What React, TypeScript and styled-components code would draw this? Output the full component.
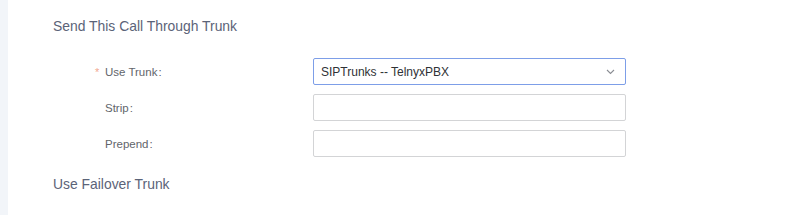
import styled, { createGlobalStyle } from "styled-components"

const GlobalStyle = createGlobalStyle`
  html, body {
    margin: 0;
    padding: 0;
    background: #ffffff;
    font-family: "Liberation Sans", Arial, sans-serif;
  }
`
const Page = styled.div`
  display: flex;
  width: 800px;
  height: 215px;
  overflow: hidden;
`
const Rail = styled.div`
  width: 8px;
  background-color: #f2f5f9;
  flex-shrink: 0;
`
const Main = styled.div`
  flex: 1;
  padding: 17px 0 0 45px;
`
const SectionTitle = styled.h3`
  margin: 0;
  font-size: 13.9px;
  font-weight: 400;
  line-height: 18px;
  color: #5b6378;
`
const Form = styled.div`
  display: flex;
  flex-direction: column;
  gap: 9px;
  margin: 23px 0 18px;
`
const Row = styled.div`
  display: flex;
  align-items: center;
`
const Label = styled.label`
  width: 218px;
  padding-left: 42px;
  font-size: 11.5px;
  color: #62656b;
  display: flex;
  align-items: center;
`
const Star = styled.span<{ $show?: boolean }>`
  width: 10px;
  color: #f2a98f;
  font-size: 11px;
  visibility: ${(p) => (p.$show ? "visible" : "hidden")};
`
const Colon = styled.span`
  margin-left: 1px;
`
const Field = styled.div<{ $focused?: boolean }>`
  box-sizing: border-box;
  width: 313px;
  height: 27px;
  border: 1px solid ${(p) => (p.$focused ? "#7d9ee8" : "#d3d4d6")};
  border-radius: 2px;
  display: flex;
  align-items: center;
  justify-content: space-between;
  padding: 0 10px 0 7px;
  font-size: 12px;
  color: #2f3236;
`
const Chevron = () => (
  <svg width="9" height="6" viewBox="0 0 9 6">
    <path d="M1 1l3.5 3.5L8 1" fill="none" stroke="#8a8d93" strokeWidth="1.1" />
  </svg>
)

type FormRowProps = {
  label: string
  required?: boolean
  value?: string
  select?: boolean
}

const FormRow = ({ label, required, value, select }: FormRowProps) => {
  return (
    <Row>
      <Label>
        <Star $show={required}>*</Star>
        {label}
        <Colon>:</Colon>
      </Label>
      <Field $focused={select}>
        <span>{value}</span>
        {select && <Chevron />}
      </Field>
    </Row>
  )
}

export default function App() {
  return (
    <Page>
      <GlobalStyle />
      <Rail />
      <Main>
        <SectionTitle>Send This Call Through Trunk</SectionTitle>
        <Form>
          <FormRow label="Use Trunk" required select value="SIPTrunks -- TelnyxPBX" />
          <FormRow label="Strip" />
          <FormRow label="Prepend" />
        </Form>
        <SectionTitle>Use Failover Trunk</SectionTitle>
      </Main>
    </Page>
  )
}
